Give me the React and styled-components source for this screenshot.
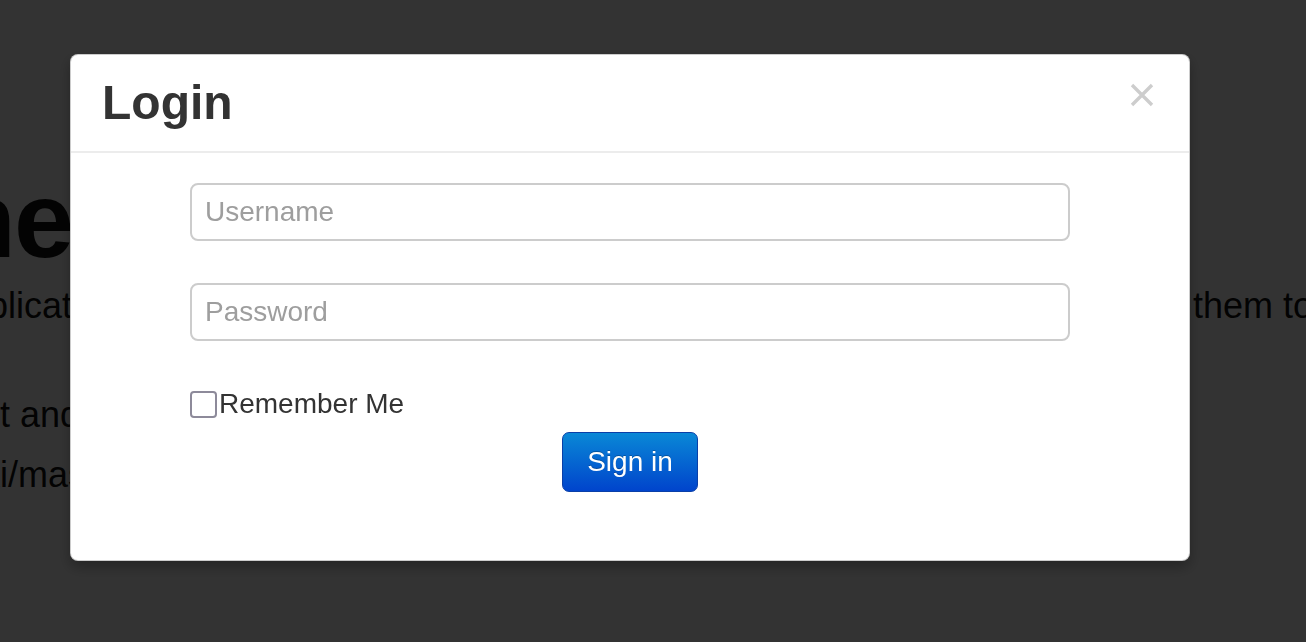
import styled, { createGlobalStyle } from 'styled-components';

const GlobalStyle = createGlobalStyle`
  html, body {
    margin: 0;
    padding: 0;
    height: 100%;
  }
  body {
    background: #fff;
    color: #111;
    font-family: "Liberation Sans", Arial, sans-serif;
    overflow: hidden;
  }
`;

// page content behind the dialog (scrolled, mostly hidden)
const Page = styled.div`
  padding-top: 164px;
`;

const Line = styled.div`
  display: flex;
  white-space: nowrap;
  font-size: ${(p) => p.$size}px;
  font-weight: ${(p) => p.$weight || 'normal'};
  line-height: ${(p) => p.$lh}px;
  letter-spacing: ${(p) => p.$spacing || 0}px;
  margin-top: ${(p) => p.$gap || 0}px;
`;

const Lead = styled.span`
  display: flex;
  justify-content: flex-end;
  flex: 0 0 ${(p) => p.$width}px;
  overflow: hidden;

  > span {
    flex-shrink: 0;
  }
`;

const Tail = styled.span`
  margin-left: ${(p) => p.$offset}px;
`;

const Backdrop = styled.div`
  position: fixed;
  inset: 0;
  box-sizing: border-box;
  padding: 54px 0 0 70px;
  background: rgba(0, 0, 0, 0.8);
`;

const Modal = styled.div`
  width: 1120px;
  box-sizing: border-box;
  background: #fff;
  border: 1px solid rgba(0, 0, 0, 0.2);
  border-radius: 8px;
  box-shadow: 0 6px 14px rgba(0, 0, 0, 0.3);
`;

const Header = styled.div`
  display: flex;
  justify-content: space-between;
  align-items: flex-start;
  padding: 18px 31px 18px 31px;
  border-bottom: 2px solid #ececec;
`;

const Title = styled.h3`
  margin: 0;
  font-size: 48px;
  line-height: 60px;
  font-weight: bold;
  color: #333;
`;

const Close = styled.button`
  display: flex;
  margin: 10px 4px 0 0;
  padding: 0;
  border: 0;
  background: none;
  cursor: pointer;
`;

const Body = styled.div`
  padding: 30px 30px 68px;
`;

const Form = styled.form`
  width: 880px;
  margin: 0 auto;
  display: flex;
  flex-direction: column;
`;

const Input = styled.input`
  box-sizing: border-box;
  height: 58px;
  margin-bottom: ${(p) => p.$mb || 0}px;
  padding: 0 13px;
  border: 2px solid #ccc;
  border-radius: 8px;
  font-family: "Liberation Sans", Arial, sans-serif;
  font-size: 28px;
  color: #555;
  outline: none;

  &::placeholder {
    color: #9e9e9e;
  }
`;

const CheckRow = styled.label`
  display: flex;
  align-items: center;
  gap: 2px;
  height: 40px;
  margin-top: 43px;
  font-size: 28px;
  line-height: 36px;
  color: #333;
`;

const Check = styled.input`
  appearance: none;
  box-sizing: border-box;
  width: 27px;
  height: 27px;
  margin: 0;
  border: 2px solid #8d8a9a;
  border-radius: 4px;
  background: #fff;
`;

const Actions = styled.div`
  display: flex;
  justify-content: center;
  margin-top: 8px;
`;

const PrimaryButton = styled.button`
  box-sizing: border-box;
  height: 60px;
  padding: 0 24px;
  border: 1px solid #0a3fa8;
  border-radius: 7px;
  background: linear-gradient(to bottom, #0a88d6, #0044cc);
  color: #fff;
  font-family: "Liberation Sans", Arial, sans-serif;
  font-size: 28px;
  text-shadow: 0 -1px 0 rgba(0, 0, 0, 0.25);
  cursor: pointer;
`;

const backgroundLines = [
  { lead: 'Welcome to the', tail: '', width: 72, size: 108, lh: 112, spacing: -2, weight: 'bold' },
  { lead: 'This simple applicat', tail: 'them to get started.', width: 72, size: 36, lh: 60 },
  { lead: 'Fork it and', tail: '', width: 80, size: 36, lh: 60, gap: 49 },
  { lead: 'github.com/example/wiki/mas', tail: '', width: 86, size: 36, lh: 60 },
];

const CloseIcon = () => (
  <svg width="24" height="24" viewBox="0 0 24 24">
    <path d="M2 2 L22 22 M22 2 L2 22" stroke="#cdcdcd" strokeWidth="3.4" />
  </svg>
);

export default function App() {
  return (
    <>
      <GlobalStyle />
      <Page>
        {backgroundLines.map((l) => (
          <Line
            key={l.lead}
            $size={l.size}
            $lh={l.lh}
            $spacing={l.spacing}
            $weight={l.weight}
            $gap={l.gap}
          >
            <Lead $width={l.width}>
              <span>{l.lead}</span>
            </Lead>
            {l.tail && <Tail $offset={1193 - l.width}>{l.tail}</Tail>}
          </Line>
        ))}
      </Page>
      <Backdrop>
        <Modal>
          <Header>
            <Title>Login</Title>
            <Close type="button" aria-label="Close">
              <CloseIcon />
            </Close>
          </Header>
          <Body>
            <Form onSubmit={(e) => e.preventDefault()}>
              <Input type="text" placeholder="Username" $mb={42} />
              <Input type="password" placeholder="Password" />
              <CheckRow>
                <Check type="checkbox" />
                Remember Me
              </CheckRow>
              <Actions>
                <PrimaryButton type="submit">Sign in</PrimaryButton>
              </Actions>
            </Form>
          </Body>
        </Modal>
      </Backdrop>
    </>
  );
}
